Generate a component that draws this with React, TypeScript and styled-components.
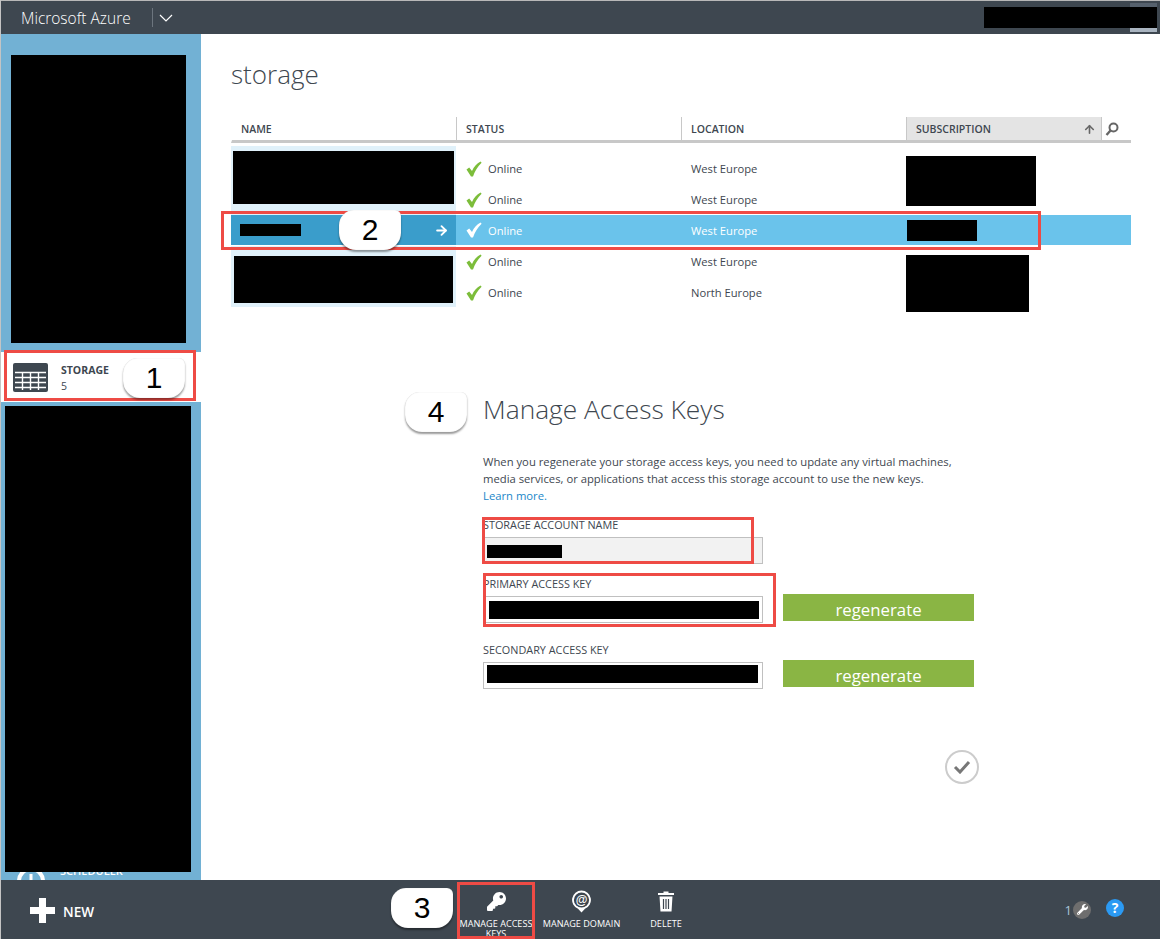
import { ReactNode } from 'react';
import styled, { createGlobalStyle } from 'styled-components';
import { ArrowRight, ArrowUp } from 'lucide-react';
import { FaKey, FaWrench } from 'react-icons/fa';

const GlobalStyle = createGlobalStyle`
  html, body { margin: 0; padding: 0; background: #fff; }
  body { font-family: "Open Sans", "Noto Sans", "Liberation Sans", sans-serif; color: #333; }
  * { box-sizing: border-box; }
`;

const CheckMark = ({ color = '#7cbd3a' }: { color?: string }) => (
  <CheckSvg viewBox="0 0 16 16">
    <path d="M0.5 8.5 L3.2 6.5 L6 10 C7.8 6 10.6 2.6 14.6 0.6 L15.6 1.8 C11.6 5.6 9 10 7 15.6 L5 15.6 Z" fill={color} />
  </CheckSvg>
);

const rows: { status: string; location: string }[] = [
  { status: 'Online', location: 'West Europe' },
  { status: 'Online', location: 'West Europe' },
  { status: 'Online', location: 'West Europe' },
  { status: 'Online', location: 'West Europe' },
  { status: 'Online', location: 'North Europe' },
];

const Field = ({ label, gap, children }: { label: string; gap: number; children: ReactNode }) => (
  <FieldBlock $gap={gap}>
    <FieldLabel>{label}</FieldLabel>
    {children}
  </FieldBlock>
);

export default function App() {
  return (
    <Page>
      <GlobalStyle />
      <TopBar>
        <Brand>Microsoft Azure</Brand>
        <BrandDivider />
        <svg width="14" height="8" viewBox="0 0 14 8">
          <path d="M1 1 L7 7 L13 1" fill="none" stroke="#fff" strokeWidth="1.2" />
        </svg>
        <AccountArea>
          <Avatar />
          <AccountRedaction />
        </AccountArea>
      </TopBar>

      <Middle>
        <Sidebar>
          <TopRedaction />
          <SideItem>
            <StorageIcon viewBox="0 0 35 29">
              <rect width="35" height="29" rx="2" fill="#3e4750" />
              <path d="M2 9.5H33M2 14.5H33M2 19.5H33M2 24.5H33M9.5 9V27M17.5 9V27M25.5 9V27" stroke="#fff" strokeWidth="1.4" />
            </StorageIcon>
            <SideText>
              <SideName>STORAGE</SideName>
              <SideCount>5</SideCount>
            </SideText>
            <Callout $top={6} $left={122}>1</Callout>
            <RedFrame $top={-2} $left={3} $w={192} $h={51} />
          </SideItem>
          <BottomRedaction />
          <SchedulerPeek>
            <svg width="30" height="30" viewBox="0 0 30 30">
              <circle cx="15" cy="15" r="12" fill="none" stroke="#fff" strokeWidth="4" />
              <path d="M15 8V15L21 20" fill="none" stroke="#fff" strokeWidth="3" />
            </svg>
            <span>SCHEDULER</span>
          </SchedulerPeek>
        </Sidebar>

        <Main>
          <PageTitle>storage</PageTitle>
          <Table>
            <HeadCell>NAME</HeadCell>
            <HeadCell>STATUS</HeadCell>
            <HeadCell>LOCATION</HeadCell>
            <HeadCell $sorted>
              SUBSCRIPTION
              <ArrowUp size={13} color="#666" strokeWidth={3} />
            </HeadCell>
            <SearchCell>
              <svg width="14" height="14" viewBox="0 0 14 14">
                <circle cx="8.5" cy="5.5" r="4" fill="none" stroke="#666" strokeWidth="2" />
                <path d="M5.5 8.5L1.5 13" stroke="#666" strokeWidth="2.4" />
              </svg>
            </SearchCell>

            <NameBlock $row="1 / 3">
              <NameRedaction $h={53} />
            </NameBlock>
            <NameSelected>
              <SelectedRedaction />
              <ArrowRight size={15} color="#fff" strokeWidth={3} />
              <Callout $top={-5} $left={108}>2</Callout>
            </NameSelected>
            <NameBlock $row="4 / 6" $pad={10}>
              <NameRedaction $h={47} $inset={3} />
            </NameBlock>

            {rows.map((r, i) => (
              <RowCells key={i} $row={i + 1} $selected={i === 2}>
                <StatusCell>
                  <CheckMark color={i === 2 ? '#fff' : undefined} />
                  {r.status}
                </StatusCell>
                <TextCell>{r.location}</TextCell>
              </RowCells>
            ))}

            <SubBlock $row="1 / 3">
              <SubRedaction $w={130} $h={50} $top={10} />
            </SubBlock>
            <SubSelected>
              <SubRedaction $w={70} $h={21} $top={5} $left={1} />
            </SubSelected>
            <SelectedTail />
            <SubBlock $row="4 / 6">
              <SubRedaction $w={123} $h={57} $top={9} />
            </SubBlock>
            <RedFrame $top={94} $left={-10} $w={820} $h={39} />
          </Table>

          <Form>
            <FormTitle>
              <Callout $top={1} $left={-78}>4</Callout>
              Manage Access Keys
            </FormTitle>
            <Intro>
              When you regenerate your storage access keys, you need to update any virtual machines,
              <br />
              media services, or applications that access this storage account to use the new keys.
              <br />
              <LearnMore href="#">Learn more.</LearnMore>
            </Intro>

            <Field label="STORAGE ACCOUNT NAME" gap={14}>
              <KeyRow>
                <KeyInput $muted>
                  <KeyRedaction $w={75} $h={13} $top={7} $left={3} />
                </KeyInput>
              </KeyRow>
              <RedFrame $top={-1} $left={-1} $w={272} $h={47} />
            </Field>

            <Field label="PRIMARY ACCESS KEY" gap={13}>
              <KeyRow>
                <KeyInput>
                  <KeyRedaction $w={270} $h={18} $top={4} $left={5} />
                </KeyInput>
                <Regenerate>regenerate</Regenerate>
              </KeyRow>
              <RedFrame $top={-4} $left={0} $w={293} $h={54} />
            </Field>

            <Field label="SECONDARY ACCESS KEY" gap={20}>
              <KeyRow>
                <KeyInput>
                  <KeyRedaction $w={271} $h={18} $top={2} $left={3} />
                </KeyInput>
                <Regenerate>regenerate</Regenerate>
              </KeyRow>
            </Field>

            <ConfirmRow>
              <ConfirmButton>
                <svg width="18" height="14" viewBox="0 0 18 14">
                  <path d="M2 7L7 12L16 2" fill="none" stroke="#777" strokeWidth="3" />
                </svg>
              </ConfirmButton>
            </ConfirmRow>
          </Form>
        </Main>
      </Middle>

      <Footer>
        <NewButton>
          <PlusIcon viewBox="0 0 25 25">
            <path d="M9 0H16V9H25V16H16V25H9V16H0V9H9Z" fill="#fff" />
          </PlusIcon>
          <NewLabel>NEW</NewLabel>
        </NewButton>
        <Actions>
          <Action>
            <FaKey size={19} color="#fff" />
            <ActionLabel>MANAGE ACCESS KEYS</ActionLabel>
            <Callout $top={8} $left={-66}>3</Callout>
            <RedFrame $top={2} $left={0} $w={78} $h={57} />
          </Action>
          <Action>
            <svg width="21" height="23" viewBox="0 0 21 23">
              <path d="M10.5 0.5A9.5 9.5 0 0 1 14 18.8L10.5 22.5L7 18.8A9.5 9.5 0 0 1 10.5 0.5Z" fill="#fff" />
              <circle cx="10.5" cy="10" r="7.6" fill="#3e4750" />
              <AtSign x="10.5" y="14.2" textAnchor="middle">@</AtSign>
            </svg>
            <ActionLabel>MANAGE DOMAIN</ActionLabel>
          </Action>
          <Action>
            <svg width="16" height="21" viewBox="0 0 16 21">
              <path d="M5.5 2V0.5H10.5V2H16V4H0V2Z" fill="#fff" />
              <path d="M1.5 5.5H14.5L13.5 20.5H2.5Z" fill="#fff" />
              <path d="M5.5 8V18M8 8V18M10.5 8V18" stroke="#3e4750" strokeWidth="1.2" />
            </svg>
            <ActionLabel>DELETE</ActionLabel>
          </Action>
        </Actions>
        <Status>
          1
          <WrenchBadge>
            <FaWrench size={11} color="#fff" />
          </WrenchBadge>
          <HelpBadge>?</HelpBadge>
        </Status>
      </Footer>
    </Page>
  );
}

const Page = styled.div`
  position: relative;
  width: 1160px;
  height: 939px;
  display: flex;
  flex-direction: column;
  overflow: hidden;
  border-left: 1px solid #c4c4c4;
`;

const TopBar = styled.header`
  height: 34px;
  flex: none;
  display: flex;
  align-items: center;
  padding: 0 0 0 20px;
  background: #3e4750;
  border-top: 1px solid #b8b8b8;
`;

const Brand = styled.div`
  width: 131px;
  font-size: 15.5px;
  font-weight: 300;
  color: #fff;
  white-space: nowrap;
`;

const BrandDivider = styled.div`
  width: 1px;
  height: 19px;
  margin-right: 6px;
  background: #6c757e;
`;

const AccountArea = styled.div`
  position: relative;
  width: 173px;
  height: 21px;
  margin-left: auto;
  margin-right: 3px;
`;

const Avatar = styled.div`
  position: absolute;
  right: 0;
  top: -4px;
  width: 27px;
  height: 29px;
  background: linear-gradient(#56616d 0 85%, #a9b4c0 85%);
`;

const AccountRedaction = styled.div`
  position: absolute;
  inset: 0;
  background: #000;
`;

const Middle = styled.div`
  flex: 1;
  display: flex;
  min-height: 0;
`;

const Sidebar = styled.aside`
  width: 200px;
  flex: none;
  display: flex;
  flex-direction: column;
  background: #72b1d4;
  overflow: hidden;
`;

const TopRedaction = styled.div`
  flex: none;
  width: 175px;
  height: 288px;
  margin: 21px 0 9px 10px;
  background: #000;
`;

const SideItem = styled.div`
  position: relative;
  flex: none;
  height: 50px;
  display: flex;
  align-items: center;
  gap: 13px;
  padding-left: 12px;
  background: #fff;
  z-index: 1;
`;

const StorageIcon = styled.svg`
  width: 35px;
  height: 29px;
`;

const SideText = styled.div`
  display: flex;
  flex-direction: column;
  gap: 2px;
  padding-top: 1px;
`;

const SideName = styled.div`
  font-size: 10.5px;
  line-height: 14px;
  font-weight: 700;
  color: #3e4750;
`;

const SideCount = styled.div`
  font-size: 10.5px;
  line-height: 14px;
  color: #3e4750;
`;

const BottomRedaction = styled.div`
  flex: none;
  width: 186px;
  height: 466px;
  margin: 4px 0 0 4px;
  background: #000;
`;

const SchedulerPeek = styled.div`
  height: 8px;
  display: flex;
  align-items: flex-end;
  gap: 14px;
  padding-left: 15px;
  color: #fff;
  font-size: 11px;
  font-weight: 600;
  line-height: 12px;
  overflow: hidden;

  svg {
    flex: none;
    margin-bottom: -16px;
  }
  span {
    margin-bottom: 3px;
  }
`;

const Main = styled.main`
  flex: 1;
  min-width: 0;
  display: flex;
  flex-direction: column;
  padding-left: 30px;
  background: #fff;
`;

const PageTitle = styled.h1`
  margin: 20px 0 0;
  height: 63px;
  font-size: 26px;
  line-height: 40px;
  font-weight: 300;
  color: #3e4750;
`;

const Table = styled.div`
  position: relative;
  width: 900px;
  display: grid;
  grid-template-columns: 225px 225px 225px 195px 30px;
  grid-template-rows: 26px 3px 38px 31px 31px 31px 31px;
`;

const HeadCell = styled.div<{ $sorted?: boolean }>`
  grid-row: 1;
  display: flex;
  align-items: center;
  justify-content: space-between;
  padding: 1px 5px 0 9px;
  font-size: 10.5px;
  font-weight: 600;
  color: #3e4750;
  background: ${p => (p.$sorted ? '#e4e4e4' : 'transparent')};
  border-bottom: 3px solid #c8c8c8;
  border-left: 1px solid ${p => (p.$sorted ? '#c8c8c8' : '#fff')};

  & + & {
    border-left: 1px solid #c8c8c8;
  }
`;

const SearchCell = styled(HeadCell)`
  padding: 0 0 0 3px;
  justify-content: flex-start;
`;

const NameBlock = styled.div<{ $row: string; $pad?: number }>`
  grid-column: 1;
  grid-row: ${p => p.$row.split(' / ').map(n => Number(n) + 2).join(' / ')};
  padding-top: ${p => p.$pad ?? 5}px;
  background: #e0f1fa;
  margin-bottom: ${p => (p.$pad ? 1 : 0)}px;
`;

const NameRedaction = styled.div<{ $h: number; $inset?: number }>`
  height: ${p => p.$h}px;
  margin: 0 ${p => p.$inset ?? 2}px;
  background: #000;
`;

const NameSelected = styled.div`
  position: relative;
  grid-column: 1;
  grid-row: 5;
  height: 30px;
  display: flex;
  align-items: center;
  justify-content: space-between;
  padding: 0 7px 0 9px;
  background: #3a9dcb;
`;

const SelectedRedaction = styled.div`
  width: 61px;
  height: 12px;
  background: #000;
`;

const RowCells = styled.div<{ $row: number; $selected?: boolean }>`
  grid-column: 2 / 4;
  grid-row: ${p => p.$row + 2};
  height: ${p => (p.$selected ? 30 : 31)}px;
  align-self: ${p => (p.$row === 1 ? 'end' : 'start')};
  display: grid;
  grid-template-columns: 225px 225px;
  align-items: center;
  color: ${p => (p.$selected ? '#fff' : '#3e4750')};
  background: ${p => (p.$selected ? '#6ac3eb' : 'transparent')};
`;

const TextCell = styled.div`
  padding-left: 10px;
  font-size: 11.2px;
  white-space: nowrap;
`;

const StatusCell = styled(TextCell)`
  display: flex;
  align-items: center;
  gap: 6px;
`;

const CheckSvg = styled.svg`
  width: 16px;
  height: 16px;
  flex: none;
`;

const SubBlock = styled.div<{ $row: string }>`
  grid-column: 4;
  grid-row: ${p => p.$row.split(' / ').map(n => Number(n) + 2).join(' / ')};
`;

const SubSelected = styled.div`
  grid-column: 4;
  grid-row: 5;
  height: 30px;
  background: #6ac3eb;
`;

const SelectedTail = styled.div`
  grid-column: 5;
  grid-row: 5;
  height: 30px;
  background: #6ac3eb;
`;

const SubRedaction = styled.div<{ $w: number; $h: number; $top: number; $left?: number }>`
  width: ${p => p.$w}px;
  height: ${p => p.$h}px;
  margin: ${p => p.$top}px 0 0 ${p => p.$left ?? 0}px;
  background: #000;
`;

const Form = styled.section`
  width: 496px;
  margin: 83px 0 0 252px;
`;

const FormTitle = styled.h2`
  position: relative;
  margin: 0;
  height: 36px;
  font-size: 26.3px;
  line-height: 36px;
  font-weight: 300;
  color: #3e4750;
`;

const Intro = styled.p`
  margin: 26px 0 0;
  font-size: 11.27px;
  line-height: 17px;
  color: #3e4750;
  white-space: nowrap;
`;

const LearnMore = styled.a`
  color: #1b87c9;
  text-decoration: none;
`;

const FieldBlock = styled.div<{ $gap: number }>`
  position: relative;
  margin-top: ${p => p.$gap}px;
`;

const FieldLabel = styled.div`
  height: 14px;
  margin-bottom: 5px;
  font-size: 10.85px;
  line-height: 14px;
  font-weight: 500;
  color: #3e4750;
  white-space: nowrap;
`;

const KeyRow = styled.div`
  display: flex;
  align-items: flex-start;
  gap: 20px;
`;

const KeyInput = styled.div<{ $muted?: boolean }>`
  width: 280px;
  height: 27px;
  flex: none;
  border: 1px solid #c0c0c0;
  background: ${p => (p.$muted ? '#f2f2f2' : '#fff')};
  overflow: hidden;
`;

const KeyRedaction = styled.div<{ $w: number; $h: number; $top: number; $left: number }>`
  width: ${p => p.$w}px;
  height: ${p => p.$h}px;
  margin: ${p => p.$top}px 0 0 ${p => p.$left}px;
  background: #000;
`;

const Regenerate = styled.button`
  width: 191px;
  height: 27px;
  margin-top: -2px;
  padding: 4px 0 0;
  border: none;
  background: #8ab544;
  color: #fff;
  font-family: inherit;
  font-size: 16.8px;
  line-height: 20px;
`;

const ConfirmRow = styled.div`
  display: flex;
  justify-content: flex-end;
  margin-top: 61px;
`;

const ConfirmButton = styled.div`
  width: 34px;
  height: 34px;
  display: flex;
  align-items: center;
  justify-content: center;
  border: 2px solid #ccc;
  border-radius: 50%;
`;

const Footer = styled.footer`
  height: 59px;
  flex: none;
  display: flex;
  align-items: flex-start;
  background: #3e4750;
  color: #fff;
`;

const NewButton = styled.div`
  width: 456px;
  height: 100%;
  display: flex;
  align-items: center;
  gap: 8px;
  padding: 2px 0 0 29px;
  font-size: 13.6px;
  font-weight: 600;
`;

const NewLabel = styled.span`
  padding-top: 2px;
`;

const PlusIcon = styled.svg`
  width: 25px;
  height: 25px;
`;

const Actions = styled.div`
  display: grid;
  grid-template-columns: 78px 93px 76px;
`;

const Action = styled.div`
  position: relative;
  height: 59px;
  display: flex;
  flex-direction: column;
  align-items: center;
  justify-content: flex-start;
  padding-top: 10px;

  > svg {
    height: 23px;
    flex: none;
  }
`;

const ActionLabel = styled.div`
  margin-top: 6px;
  font-size: 9.1px;
  line-height: 10px;
  text-align: center;
  color: #fff;
`;

const AtSign = styled.text`
  font-family: "Liberation Sans", sans-serif;
  font-size: 12px;
  font-weight: 700;
  fill: #fff;
`;

const Status = styled.div`
  margin-left: auto;
  display: flex;
  align-items: center;
  height: 59px;
  padding: 0 36px 0 0;
  font-size: 13px;
  color: #a9c4d8;
`;

const WrenchBadge = styled.div`
  width: 18px;
  height: 18px;
  margin-left: 1px;
  display: flex;
  align-items: center;
  justify-content: center;
  border-radius: 50%;
  background: #6e6e6e;
`;

const HelpBadge = styled.div`
  width: 18px;
  height: 18px;
  margin: -4px 0 0 15px;
  border-radius: 50%;
  background: #2b9af3;
  color: #fff;
  font-size: 14px;
  line-height: 18px;
  font-weight: 700;
  text-align: center;
`;

const Callout = styled.div<{ $top: number; $left: number }>`
  position: absolute;
  top: ${p => p.$top}px;
  left: ${p => p.$left}px;
  width: 62px;
  height: 40px;
  border-radius: 15px 6px 17px 17px;
  background: #fff;
  box-shadow: 0 2px 2px rgba(0, 0, 0, 0.4), inset 0 0 1px rgba(0, 0, 0, 0.2);
  color: #000;
  font-family: "Liberation Sans", sans-serif;
  font-size: 30px;
  font-weight: 400;
  line-height: 40px;
  text-align: center;
  z-index: 3;
`;

const RedFrame = styled.div<{ $top: number; $left: number; $w: number; $h: number }>`
  position: absolute;
  top: ${p => p.$top}px;
  left: ${p => p.$left}px;
  width: ${p => p.$w}px;
  height: ${p => p.$h}px;
  border: 3px solid #ee4b45;
  pointer-events: none;
  z-index: 2;
`;
